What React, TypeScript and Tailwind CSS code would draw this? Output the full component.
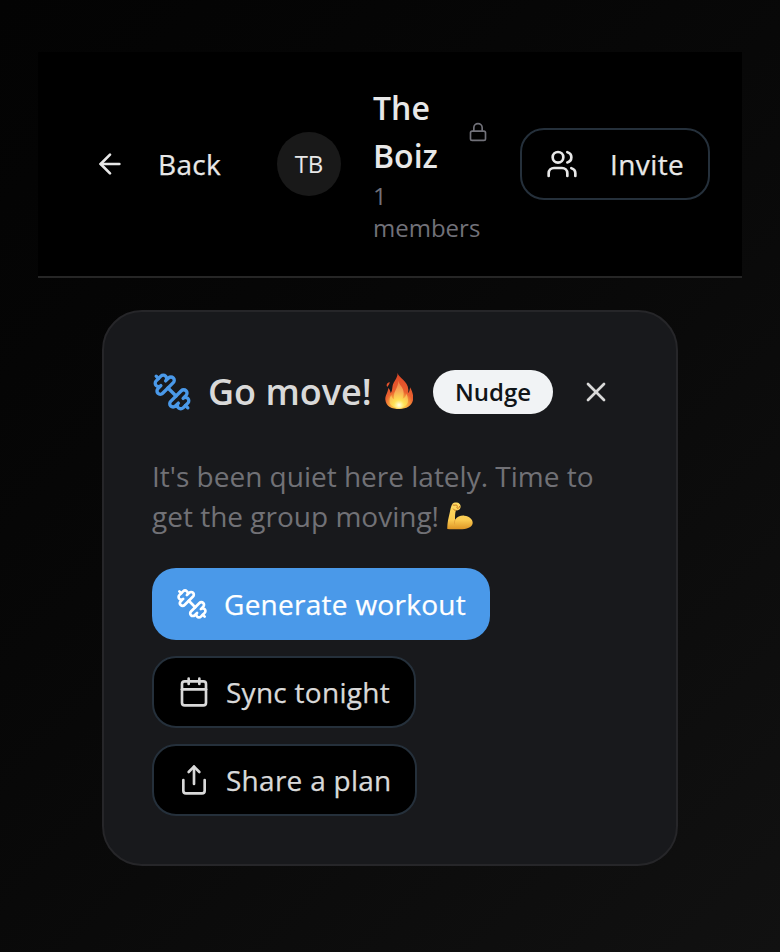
import type { ReactNode } from "react";

function Icon({ className, children }: { className: string; children: ReactNode }) {
  return (
    <svg
      viewBox="0 0 24 24"
      fill="none"
      stroke="currentColor"
      strokeWidth={2}
      strokeLinecap="round"
      strokeLinejoin="round"
      className={`shrink-0 ${className}`}
    >
      {children}
    </svg>
  );
}

function Dumbbell({ className }: { className: string }) {
  return (
    <Icon className={className}>
      <path d="M14.4 14.4 9.6 9.6" />
      <path d="M18.657 21.485a2 2 0 1 1-2.829-2.828l-1.767 1.768a2 2 0 1 1-2.829-2.829l6.364-6.364a2 2 0 1 1 2.829 2.829l-1.768 1.767a2 2 0 1 1 2.828 2.829z" />
      <path d="m21.5 21.5-1.4-1.4" />
      <path d="M3.9 3.9 2.5 2.5" />
      <path d="M6.404 12.768a2 2 0 1 1-2.829-2.829l1.768-1.767a2 2 0 1 1-2.828-2.829l2.828-2.828a2 2 0 1 1 2.829 2.828l1.767-1.768a2 2 0 1 1 2.829 2.829z" />
    </Icon>
  );
}

function Fire() {
  return (
    <svg viewBox="0 0 84 108" role="img" aria-label="fire" className="mb-0.5 h-9 w-7 shrink-0">
      <defs>
        <radialGradient id="flame" gradientUnits="userSpaceOnUse" cx="42" cy="96" r="96">
          <stop offset="0" stopColor="#ffe45c" />
          <stop offset="0.25" stopColor="#fbb040" />
          <stop offset="0.45" stopColor="#e9602f" />
          <stop offset="1" stopColor="#dd4526" />
        </radialGradient>
        <radialGradient id="flame-mid" gradientUnits="userSpaceOnUse" cx="42" cy="98" r="72">
          <stop offset="0" stopColor="#fff7a8" />
          <stop offset="0.25" stopColor="#ffe052" />
          <stop offset="0.6" stopColor="#f7ab55" />
          <stop offset="1" stopColor="#ee8048" />
        </radialGradient>
        <radialGradient id="flame-core" gradientUnits="userSpaceOnUse" cx="42" cy="96" r="15">
          <stop offset="0" stopColor="#fffff0" />
          <stop offset="1" stopColor="#fff07a" stopOpacity="0" />
        </radialGradient>
      </defs>
      <path
        d="M38 0C40 14 69 23 70 50c0 5 0 8-1 11 5-5 6-12 6-18 8 14 11 27 9 39-4 17-20 26-40 26C20 108 3 100 1 80 0 68 8 61 10 45c4 3 6 9 7 15 7-8 3-20 9-31 5-9 12-17 12-29Z"
        fill="url(#flame)"
      />
      <path
        d="M40 22c1 15 17 20 16 40-1 8-2 11-3 15 8-3 10-10 11-15 6 12 7 24 2 32-5 7-14 11-24 11-13 0-25-5-28-17-1-8 0-15 5-22 1 7 4 11 8 13-1-14 1-21 6-30 4-8 7-15 7-27Z"
        fill="url(#flame-mid)"
      />
      <circle cx="42" cy="96" r="15" fill="url(#flame-core)" />
      <path d="M14 27c0 8-4 9-7 15-4-5-2-12 7-15Z" fill="#e8532c" />
    </svg>
  );
}

function FlexedArm() {
  return (
    <svg viewBox="0 0 78 84" role="img" aria-label="flexed biceps" className="ml-px inline-block h-7 w-[26px] align-[-3px]">
      <defs>
        <linearGradient id="arm" x1="0" y1="0" x2="0" y2="1">
          <stop offset="0" stopColor="#ffdc64" />
          <stop offset="0.65" stopColor="#fbcb51" />
          <stop offset="1" stopColor="#dd9424" />
        </linearGradient>
      </defs>
      <path
        d="M16 6C20 1 32 0 37 5c5 4 5 12 1 17-3 3-7 4-11 3-3 8-3 17-3 28 7-9 17-13 28-12 16 1 26 12 25 23-2 13-17 18-39 18-15 0-28 0-37-1C0 67 4 49 8 33 10 23 12 12 16 6Z"
        fill="url(#arm)"
      />
      <path d="M24 54c-2 4-2 8-1 12" fill="none" stroke="#dc9833" strokeWidth="2" strokeLinecap="round" />
      <path
        d="M18 9c5 3 8-2 12 1 4 3-2 5 0 8 3 3 7 0 8-5M27 25c-4 0-6-1-8-4"
        fill="none"
        stroke="#c97b24"
        strokeWidth="3"
        strokeLinecap="round"
      />
    </svg>
  );
}

export default function App() {
  return (
    <div className="h-[952px] w-[780px] overflow-hidden bg-linear-135 from-[#030303] to-[#111111] px-[38px] pt-[52px] font-['Open_Sans',sans-serif] text-[#e8e8e8]">
      <header className="flex h-[226px] items-center gap-8 border-b-2 border-[#262626] bg-black px-8">
        <button className="flex h-[72px] w-[175px] shrink-0 items-center gap-8 pl-6 text-[28px] tracking-[0.3px] whitespace-nowrap">
          <Icon className="size-8">
            <path d="m12 19-7-7 7-7" />
            <path d="M19 12H5" />
          </Icon>
          <span className="[-webkit-text-stroke:0.25px]">Back</span>
        </button>
        <div className="flex size-16 shrink-0 items-center justify-center rounded-full bg-[#191919] text-2xl">
          TB
        </div>
        <div className="w-[115px] shrink-0">
          <div className="flex items-center justify-between">
            <h1 className="w-[80px] text-[32px] leading-[48px] font-semibold">The Boiz</h1>
            <Icon className="size-5 text-[#717179]">
              <rect width="18" height="11" x="3" y="11" rx="2" ry="2" />
              <path d="M7 11V7a5 5 0 0 1 10 0v4" />
            </Icon>
          </div>
          <p className="text-2xl leading-8 text-[#717179]">1 members</p>
        </div>
        <button className="flex h-[72px] w-[190px] shrink-0 items-center gap-8 rounded-3xl border-2 border-[#25303b] pl-6 text-[28px] tracking-[0.4px] whitespace-nowrap">
          <Icon className="size-8">
            <path d="M16 21v-2a4 4 0 0 0-4-4H6a4 4 0 0 0-4 4v2" />
            <circle cx="9" cy="7" r="4" />
            <path d="M22 21v-2a4 4 0 0 0-3-3.87" />
            <path d="M16 3.13a4 4 0 0 1 0 7.75" />
          </Icon>
          <span className="[-webkit-text-stroke:0.25px]">Invite</span>
        </button>
      </header>

      <section className="mx-16 mt-8 h-[556px] rounded-[40px] border-2 border-[#262629] bg-[#18191c] p-12 text-[#d9d9d9]">
        <div className="flex h-16 items-center gap-4">
          <Dumbbell className="size-10 text-[#4a99e9]" />
          <h2 className="flex w-[209px] shrink-0 items-center justify-between pr-1 text-4xl font-semibold whitespace-nowrap">
            Go move!
            <Fire />
          </h2>
          <span className="flex h-11 w-[120px] shrink-0 items-center justify-center rounded-full bg-[#f1f3f5] text-2xl font-semibold text-[#101418]">
            Nudge
          </span>
          <button className="ml-[11px] shrink-0">
            <Icon className="size-8">
              <path d="M18 6 6 18" />
              <path d="m6 6 12 12" />
            </Icon>
          </button>
        </div>
        <p className="mt-8 h-20 text-[28px] leading-10 whitespace-nowrap text-[#717176]">
          It&apos;s been quiet here lately. Time to
          <br />
          get the group moving! <FlexedArm />
        </p>
        <div className="mt-8 flex flex-col items-start gap-4 text-[28px] tracking-[0.27px] whitespace-nowrap">
          <button className="flex h-[72px] w-[338px] items-center gap-4 rounded-3xl bg-[#4a99e9] pl-6 text-white">
            <Dumbbell className="size-8" />
            <span className="[-webkit-text-stroke:0.25px]">Generate workout</span>
          </button>
          <button className="flex h-[72px] w-[264px] items-center gap-4 rounded-3xl border-2 border-[#25303b] bg-black pl-6">
            <Icon className="size-8">
              <path d="M8 2v4" />
              <path d="M16 2v4" />
              <rect width="18" height="18" x="3" y="4" rx="2" />
              <path d="M3 10h18" />
            </Icon>
            <span className="[-webkit-text-stroke:0.25px]">Sync tonight</span>
          </button>
          <button className="flex h-[72px] w-[265px] items-center gap-4 rounded-3xl border-2 border-[#25303b] bg-black pl-6">
            <Icon className="size-8">
              <path d="M4 12v8a2 2 0 0 0 2 2h12a2 2 0 0 0 2-2v-8" />
              <path d="m16 6-4-4-4 4" />
              <path d="M12 2v13" />
            </Icon>
            <span className="[-webkit-text-stroke:0.25px]">Share a plan</span>
          </button>
        </div>
      </section>
    </div>
  );
}
